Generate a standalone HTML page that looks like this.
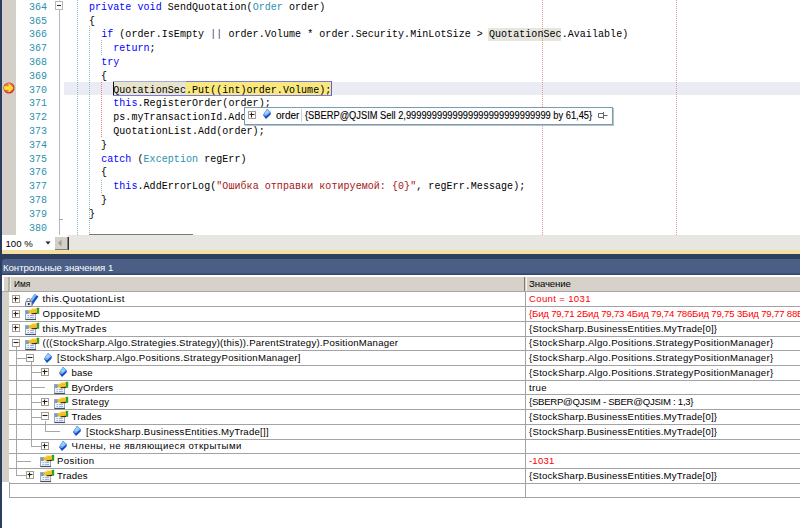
<!DOCTYPE html>
<html><head><meta charset="utf-8"><style>
html,body{margin:0;padding:0;width:800px;height:528px;overflow:hidden;background:#fff;position:relative}
div,span.a{position:absolute}
.nw{white-space:pre}
#nav{left:0;top:0;width:2px;height:528px;background:#2b3d5f}
#mg{left:2px;top:0;width:14px;height:235px;background:#d4d0c9}
.ln{left:16px;top:0.5px;width:31px;text-align:right;font:10px/13.79px "Liberation Mono",monospace;color:#2b91af;white-space:pre}
.cd{left:89px;font:10px/13.79px "Liberation Mono",monospace;letter-spacing:0.058px;color:#000;white-space:pre}
.k{color:#0000ff}.t{color:#2b91af}.s{color:#a31515}
.tipt{-webkit-text-stroke:0.1px currentColor;font:10px/16px "Liberation Sans",sans-serif;color:#000;white-space:pre;transform-origin:0 0}
.gt{font:9.6px/14.7px "Liberation Sans",sans-serif;color:#000;white-space:pre;transform-origin:0 0}
.r{color:#ff0000}
.rl{left:9px;width:791px;height:1px;background:#a3a3a6}
.tl{background:#a9a9a9}
.bx{width:7px;height:7px;border:1px solid #9d9a94;background:#fff}
.bx i{position:absolute;left:2px;top:3px;width:3px;height:1px;background:#222}
.bx b{position:absolute;left:3px;top:2px;width:1px;height:3px;background:#222}
svg{position:absolute;overflow:visible}
</style></head><body>
<div id="nav"></div>
<div id="mg"></div>
<div style="left:64px;top:82px;width:736px;height:12.6px;background:#ebebf3"></div>
<div style="left:113px;top:81px;width:218px;height:12.8px;background:#f9e87e;border-top:1.3px solid #7878e0;border-bottom:1.3px solid #7878e8;border-right:1.3px solid #5a5af0"></div>
<div style="left:113px;top:82px;width:1px;height:13px;background:#111"></div>
<div style="left:114px;top:82.3px;width:71.5px;height:12.8px;background:#e9e5cc"></div>
<div style="left:113px;top:81px;width:72.5px;height:1.3px;background:#a8a8dc"></div>
<div style="left:488px;top:27.5px;width:73px;height:13px;background:#e6e6de"></div>
<div style="left:77px;top:0px;width:1px;height:235px;background:repeating-linear-gradient(to bottom,#88bccb 0 1px,transparent 1px 2px)"></div>
<div style="left:89px;top:26px;width:1px;height:209px;background:repeating-linear-gradient(to bottom,#88bccb 0 1px,transparent 1px 2px)"></div>
<div style="left:101px;top:40px;width:1px;height:15px;background:repeating-linear-gradient(to bottom,#88bccb 0 1px,transparent 1px 2px)"></div>
<div style="left:101px;top:82px;width:1px;height:55px;background:repeating-linear-gradient(to bottom,#e88080 0 1px,transparent 1px 2px)"></div>
<div style="left:101px;top:180px;width:1px;height:13px;background:repeating-linear-gradient(to bottom,#88bccb 0 1px,transparent 1px 2px)"></div>
<div style="left:542px;top:0px;width:1px;height:235px;background:repeating-linear-gradient(to bottom,#dc9a9a 0 1px,transparent 1px 2px)"></div>
<div style="left:676px;top:0px;width:1px;height:235px;background:repeating-linear-gradient(to bottom,#dc9a9a 0 1px,transparent 1px 2px)"></div>
<div style="left:59px;top:10px;width:1px;height:225px;background:#b4b8c4"></div>
<div style="left:59px;top:0px;width:1px;height:1px;background:#c8ccd4"></div>
<div style="left:59px;top:219px;width:4px;height:1px;background:#a0a4b0"></div>
<svg style="left:55px;top:1px" width="9" height="10"><rect x="0.5" y="0.5" width="7" height="8" fill="#fff" stroke="#b8b8bc"/><path d="M2 4.5h4" stroke="#3a3030" stroke-width="1.1"/></svg>
<div style="left:89px;top:234px;width:104px;height:1px;background:#7a7a7a"></div>
<svg style="left:2px;top:80px" width="14" height="16"><circle cx="7" cy="8" r="5.6" fill="#c83030"/><circle cx="6.8" cy="7.7" r="4.6" fill="#f07850"/><path d="M2.2 6.2 L6.6 6.2 L6.6 3.2 L11.6 8 L6.6 12.6 L6.6 9.8 L2.2 9.8 Z" fill="#ffe428"/></svg>
<div class="ln" style="top:0.9px">364
365
366
367
368
369
370
371
372
373
374
375
376
377
378
379
380</div>
<div class="cd" style="top:0.9px"><span class="k">private</span> <span class="k">void</span> SendQuotation(<span class="t">Order</span> order)
{
  <span class="k">if</span> (order.IsEmpty <span style="color:#5a3a70">||</span> order.Volume * order.Security.MinLotSize &gt; QuotationSec.Available)
    <span class="k">return</span>;
  <span class="k">try</span>
  {
    QuotationSec.Put((int)order.Volume);
    <span class="k">this</span>.RegisterOrder(order);
    ps.myTransactionId.Add(order.TransactionId);
    QuotationList.Add(order);
  }
  <span class="k">catch</span> (<span class="t">Exception</span> regErr)
  {
    <span class="k">this</span>.AddErrorLog(<span class="s">"Ошибка отправки котируемой: {0}"</span>, regErr.Message);
  }
}
</div>
<div style="left:244px;top:107px;width:367px;height:16px;background:#fdfdfd;border:1px solid #7d9bb0;box-shadow:1px 1px 0 #b8c0c8"></div>
<div class="tipt" style="left:276px;top:108px">order</div>
<svg style="left:248px;top:111px" width="9" height="9"><rect x="0.5" y="0.5" width="7" height="7" fill="#fff" stroke="#a39d93"/><path d="M1.5 3.5h5 M3.5 1.5v5" stroke="#2a2016" stroke-width="1.1"/></svg>
<svg style="left:260px;top:108.5px" width="14" height="13"><path d="M7 0 L10.8 3.2 L10.6 5.6 L6 10 L3 6 Z" fill="#1846c0"/><path d="M7 0 L10.8 3.2 L6 7.3 L3 6 Z" fill="#6aaef0"/><path d="M7 0.8 L9.5 3 L6.5 5.5 L4.5 4.5 Z" fill="#9ad0fa"/></svg>
<div style="left:301px;top:109px;width:1px;height:13px;background:#c8d4e4"></div>
<svg style="left:597px;top:111px" width="12" height="9"><path d="M1.5 2.5h5v4h-5z M6.5 4.5h4 M6.5 1v7" fill="none" stroke="#606870" stroke-width="1"/></svg>
<div class="tipt" style="left:305px;top:108px;transform:scaleX(0.93)">{SBERP@QJSIM Sell 2,9999999999999999999999999999 by 61,45}</div>
<div style="left:2px;top:235px;width:50px;height:15px;background:#fff"></div>
<div class="gt" style="left:5.5px;top:236.5px">100 %</div>
<div style="left:67px;top:235px;width:733px;height:15px;background:#e8e6e1"></div>
<div style="left:54px;top:236px;width:13px;height:14px;background:#d6d3ce;border-right:1px solid #404040;border-bottom:1px solid #404040;box-sizing:border-box"></div>
<svg style="left:45px;top:241px" width="7" height="4"><path d="M0.5 0.5h5l-2.5 3z" fill="#1a1a2a"/></svg>
<div style="left:53.5px;top:236px;width:14px;height:14px;background:#d4d0c8;border-top:1px solid #fff;border-left:1px solid #fff;box-shadow:inset -1px -1px 0 #808080, 1px 1px 0 #303030;box-sizing:border-box"></div>
<svg style="left:57px;top:239px" width="6" height="8"><path d="M4.5 0.5v7l-3.5-3.5z" fill="#a09c94"/></svg>
<div style="left:2px;top:250px;width:798px;height:3.5px;background:#f3dfa0"></div>
<div style="left:2px;top:253.5px;width:798px;height:8px;background:#2d3e60"></div>
<div style="left:2px;top:258.5px;width:798px;height:16px;background:#4b5e85;border-top-left-radius:3px;box-shadow:inset 0 -1.5px 0 #34466a"></div>
<div class="gt" style="left:3px;top:260.5px;color:#fff;-webkit-text-stroke:0;letter-spacing:-0.03px">Контрольные значения 1</div>
<div style="left:2px;top:274.6px;width:798px;height:223px;background:#fff"></div>
<div style="left:2px;top:277px;width:7px;height:205px;background:#d4d0c8"></div>
<div style="left:9px;top:497px;width:1px;height:0px;background:#a3a3a6"></div>
<div style="left:2px;top:277px;width:798px;height:14px;background:#d6d2ca"></div>
<div style="left:2px;top:291px;width:798px;height:1px;background:#a8a8aa"></div>
<div style="left:2px;top:277px;width:1.5px;height:14px;background:#fff"></div>
<div style="left:8px;top:277px;width:1.5px;height:14px;background:#b4b0a8"></div>
<div style="left:9.5px;top:277px;width:1px;height:14px;background:#eeeae4"></div>
<div style="left:524px;top:277px;width:1px;height:14px;background:#8a7a68"></div>
<div style="left:525.5px;top:277px;width:1px;height:14px;background:#f4f2ee"></div>
<div class="gt" style="left:14px;top:277.3px;transform:scaleX(0.87)">Имя</div>
<div class="gt" style="left:529px;top:277.3px;letter-spacing:-0.09px">Значение</div>
<div style="left:524.5px;top:292px;width:1px;height:205px;background:#a3a3a6"></div>
<div style="left:9px;top:482px;width:1px;height:15px;background:#a3a3a6"></div>
<div style="left:16.0px;top:347.0px;width:1px;height:128.3px;background:#a6a6a6"></div>
<div style="left:30.5px;top:361.7px;width:1px;height:84.2px;background:#a6a6a6"></div>
<div style="left:45.0px;top:420.5px;width:1px;height:10.7px;background:#a6a6a6"></div>
<div style="left:16.0px;top:357.7px;width:10.5px;height:1px;background:#a6a6a6"></div>
<div style="left:30.5px;top:372.4px;width:10.5px;height:1px;background:#a6a6a6"></div>
<div style="left:30.5px;top:387.1px;width:14.5px;height:1px;background:#a6a6a6"></div>
<div style="left:30.5px;top:401.8px;width:10.5px;height:1px;background:#a6a6a6"></div>
<div style="left:30.5px;top:416.5px;width:10.5px;height:1px;background:#a6a6a6"></div>
<div style="left:45.0px;top:431.1px;width:14.5px;height:1px;background:#a6a6a6"></div>
<div style="left:30.5px;top:445.9px;width:10.5px;height:1px;background:#a6a6a6"></div>
<div style="left:16.0px;top:460.6px;width:14.5px;height:1px;background:#a6a6a6"></div>
<div style="left:16.0px;top:475.2px;width:10.5px;height:1px;background:#a6a6a6"></div>
<div class="rl" style="top:306.20px"></div>
<svg style="left:12px;top:295px" width="9" height="9"><rect x="0.5" y="0.5" width="7" height="7" fill="#fff" stroke="#a39d93"/><path d="M1.5 3.5h5" stroke="#2a2016" stroke-width="1.1"/><path d="M3.5 1.5v5" stroke="#2a2016" stroke-width="1.1"/></svg>
<svg style="left:25.0px;top:293.0px" width="14" height="13"><path d="M3.5 9.5 L9.5 1 L13.5 3.5 L7.5 12 Z" fill="#1a50c0"/><path d="M3.5 9.5 L9.5 1 L11.5 2.2 L5.5 10.7 Z" fill="#7cbcf4"/><path d="M1.8 9 v-1.8 a1.7 1.7 0 0 1 3.4 0 v1.8" fill="none" stroke="#8a90a0" stroke-width="1.1"/><rect x="0.5" y="8.5" width="6.5" height="5" rx="0.8" fill="#dfe3ea" stroke="#707888"/><rect x="3" y="10" width="1.6" height="2" fill="#283040"/></svg>
<div class="gt" style="left:42.5px;top:292.30px;letter-spacing:0.454px">this.QuotationList</div>
<div class="gt r" style="left:529px;top:292.30px;letter-spacing:0.327px">Count = 1031</div>
<div class="rl" style="top:320.90px"></div>
<svg style="left:12px;top:310px" width="9" height="9"><rect x="0.5" y="0.5" width="7" height="7" fill="#fff" stroke="#a39d93"/><path d="M1.5 3.5h5" stroke="#2a2016" stroke-width="1.1"/><path d="M3.5 1.5v5" stroke="#2a2016" stroke-width="1.1"/></svg>
<svg style="left:25.0px;top:307.3px" width="14" height="13"><rect x="0.5" y="3.5" width="10" height="9" fill="#eef4fc" stroke="#9aa8bc"/><path d="M0.5 12.5h10.5" stroke="#4a5262" stroke-width="1.2"/><rect x="1" y="4" width="2.5" height="3" fill="#6a9ae8"/><path d="M2.5 8.5h1.5 M5 8.5h4 M2.5 10.5h1.5 M5 10.5h4" stroke="#9ab0e0"/><path d="M2.5 6.8 L4.5 3 L8 1 L12.2 1 L12.2 6.6 L8 7.2 L6 6.4 Z" fill="#f0c028"/><path d="M4.5 3.2 L8 1.5 L11 1.6" stroke="#fff090" stroke-width="1" fill="none"/><path d="M6.5 6.8 L12 6.4" stroke="#3a2c10" stroke-width="1.1"/><path d="M2.6 6.8 L4 4.5" stroke="#b08a20" stroke-width="0.8"/><rect x="12" y="0.8" width="2.2" height="6" fill="#2ea02e"/></svg>
<div class="gt" style="left:42.5px;top:307.00px;letter-spacing:0.498px">OppositeMD</div>
<div class="gt r" style="left:529px;top:307.00px;letter-spacing:-0.182px">{Бид 79,71 2Бид 79,73 4Бид 79,74 786Бид 79,75 3Бид 79,77 88Бид 79,78</div>
<div class="rl" style="top:335.60px"></div>
<svg style="left:12px;top:324px" width="9" height="9"><rect x="0.5" y="0.5" width="7" height="7" fill="#fff" stroke="#a39d93"/><path d="M1.5 3.5h5" stroke="#2a2016" stroke-width="1.1"/><path d="M3.5 1.5v5" stroke="#2a2016" stroke-width="1.1"/></svg>
<svg style="left:25.0px;top:322.0px" width="14" height="13"><rect x="0.5" y="3.5" width="10" height="9" fill="#eef4fc" stroke="#9aa8bc"/><path d="M0.5 12.5h10.5" stroke="#4a5262" stroke-width="1.2"/><rect x="1" y="4" width="2.5" height="3" fill="#6a9ae8"/><path d="M2.5 8.5h1.5 M5 8.5h4 M2.5 10.5h1.5 M5 10.5h4" stroke="#9ab0e0"/><path d="M2.5 6.8 L4.5 3 L8 1 L12.2 1 L12.2 6.6 L8 7.2 L6 6.4 Z" fill="#f0c028"/><path d="M4.5 3.2 L8 1.5 L11 1.6" stroke="#fff090" stroke-width="1" fill="none"/><path d="M6.5 6.8 L12 6.4" stroke="#3a2c10" stroke-width="1.1"/><path d="M2.6 6.8 L4 4.5" stroke="#b08a20" stroke-width="0.8"/><rect x="12" y="0.8" width="2.2" height="6" fill="#2ea02e"/></svg>
<div class="gt" style="left:42.5px;top:321.70px;letter-spacing:0.34px">this.MyTrades</div>
<div class="gt" style="left:529px;top:321.70px;letter-spacing:0.21px">{StockSharp.BusinessEntities.MyTrade[0]}</div>
<div class="rl" style="top:350.30px"></div>
<svg style="left:12px;top:339px" width="9" height="9"><rect x="0.5" y="0.5" width="7" height="7" fill="#fff" stroke="#a39d93"/><path d="M1.5 3.5h5" stroke="#2a2016" stroke-width="1.1"/></svg>
<svg style="left:25.0px;top:336.7px" width="14" height="13"><rect x="0.5" y="3.5" width="10" height="9" fill="#eef4fc" stroke="#9aa8bc"/><path d="M0.5 12.5h10.5" stroke="#4a5262" stroke-width="1.2"/><rect x="1" y="4" width="2.5" height="3" fill="#6a9ae8"/><path d="M2.5 8.5h1.5 M5 8.5h4 M2.5 10.5h1.5 M5 10.5h4" stroke="#9ab0e0"/><path d="M2.5 6.8 L4.5 3 L8 1 L12.2 1 L12.2 6.6 L8 7.2 L6 6.4 Z" fill="#f0c028"/><path d="M4.5 3.2 L8 1.5 L11 1.6" stroke="#fff090" stroke-width="1" fill="none"/><path d="M6.5 6.8 L12 6.4" stroke="#3a2c10" stroke-width="1.1"/><path d="M2.6 6.8 L4 4.5" stroke="#b08a20" stroke-width="0.8"/><rect x="12" y="0.8" width="2.2" height="6" fill="#2ea02e"/></svg>
<div class="gt" style="left:42.5px;top:336.40px;letter-spacing:0.234px">(((StockSharp.Algo.Strategies.Strategy)(this)).ParentStrategy).PositionManager</div>
<div class="gt" style="left:529px;top:336.40px;letter-spacing:0.285px">{StockSharp.Algo.Positions.StrategyPositionManager}</div>
<div class="rl" style="top:365.00px"></div>
<svg style="left:26px;top:354px" width="9" height="9"><rect x="0.5" y="0.5" width="7" height="7" fill="#fff" stroke="#a39d93"/><path d="M1.5 3.5h5" stroke="#2a2016" stroke-width="1.1"/></svg>
<svg style="left:41.0px;top:352.6px" width="14" height="13"><path d="M7 0 L10.8 3.2 L10.6 5.6 L6 10 L3 6 Z" fill="#1846c0"/><path d="M7 0 L10.8 3.2 L6 7.3 L3 6 Z" fill="#6aaef0"/><path d="M7 0.8 L9.5 3 L6.5 5.5 L4.5 4.5 Z" fill="#9ad0fa"/></svg>
<div class="gt" style="left:57.0px;top:351.10px;letter-spacing:0.295px">[StockSharp.Algo.Positions.StrategyPositionManager]</div>
<div class="gt" style="left:529px;top:351.10px;letter-spacing:0.285px">{StockSharp.Algo.Positions.StrategyPositionManager}</div>
<div class="rl" style="top:379.70px"></div>
<svg style="left:41px;top:368px" width="9" height="9"><rect x="0.5" y="0.5" width="7" height="7" fill="#fff" stroke="#a39d93"/><path d="M1.5 3.5h5" stroke="#2a2016" stroke-width="1.1"/><path d="M3.5 1.5v5" stroke="#2a2016" stroke-width="1.1"/></svg>
<svg style="left:55.5px;top:367.3px" width="14" height="13"><path d="M7 0 L10.8 3.2 L10.6 5.6 L6 10 L3 6 Z" fill="#1846c0"/><path d="M7 0 L10.8 3.2 L6 7.3 L3 6 Z" fill="#6aaef0"/><path d="M7 0.8 L9.5 3 L6.5 5.5 L4.5 4.5 Z" fill="#9ad0fa"/></svg>
<div class="gt" style="left:71.5px;top:365.80px;letter-spacing:0.124px">base</div>
<div class="gt" style="left:529px;top:365.80px;letter-spacing:0.285px">{StockSharp.Algo.Positions.StrategyPositionManager}</div>
<div class="rl" style="top:394.40px"></div>
<svg style="left:54.0px;top:380.8px" width="14" height="13"><rect x="0.5" y="3.5" width="10" height="9" fill="#eef4fc" stroke="#9aa8bc"/><path d="M0.5 12.5h10.5" stroke="#4a5262" stroke-width="1.2"/><rect x="1" y="4" width="2.5" height="3" fill="#6a9ae8"/><path d="M2.5 8.5h1.5 M5 8.5h4 M2.5 10.5h1.5 M5 10.5h4" stroke="#9ab0e0"/><path d="M2.5 6.8 L4.5 3 L8 1 L12.2 1 L12.2 6.6 L8 7.2 L6 6.4 Z" fill="#f0c028"/><path d="M4.5 3.2 L8 1.5 L11 1.6" stroke="#fff090" stroke-width="1" fill="none"/><path d="M6.5 6.8 L12 6.4" stroke="#3a2c10" stroke-width="1.1"/><path d="M2.6 6.8 L4 4.5" stroke="#b08a20" stroke-width="0.8"/><rect x="12" y="0.8" width="2.2" height="6" fill="#2ea02e"/></svg>
<div class="gt" style="left:71.5px;top:380.50px;letter-spacing:0.161px">ByOrders</div>
<div class="gt" style="left:529px;top:380.50px;letter-spacing:0.317px">true</div>
<div class="rl" style="top:409.10px"></div>
<svg style="left:41px;top:398px" width="9" height="9"><rect x="0.5" y="0.5" width="7" height="7" fill="#fff" stroke="#a39d93"/><path d="M1.5 3.5h5" stroke="#2a2016" stroke-width="1.1"/><path d="M3.5 1.5v5" stroke="#2a2016" stroke-width="1.1"/></svg>
<svg style="left:54.0px;top:395.5px" width="14" height="13"><rect x="0.5" y="3.5" width="10" height="9" fill="#eef4fc" stroke="#9aa8bc"/><path d="M0.5 12.5h10.5" stroke="#4a5262" stroke-width="1.2"/><rect x="1" y="4" width="2.5" height="3" fill="#6a9ae8"/><path d="M2.5 8.5h1.5 M5 8.5h4 M2.5 10.5h1.5 M5 10.5h4" stroke="#9ab0e0"/><path d="M2.5 6.8 L4.5 3 L8 1 L12.2 1 L12.2 6.6 L8 7.2 L6 6.4 Z" fill="#f0c028"/><path d="M4.5 3.2 L8 1.5 L11 1.6" stroke="#fff090" stroke-width="1" fill="none"/><path d="M6.5 6.8 L12 6.4" stroke="#3a2c10" stroke-width="1.1"/><path d="M2.6 6.8 L4 4.5" stroke="#b08a20" stroke-width="0.8"/><rect x="12" y="0.8" width="2.2" height="6" fill="#2ea02e"/></svg>
<div class="gt" style="left:71.5px;top:395.20px;letter-spacing:0.259px">Strategy</div>
<div class="gt" style="left:529px;top:395.20px;letter-spacing:-0.273px">{SBERP@QJSIM - SBER@QJSIM : 1,3}</div>
<div class="rl" style="top:423.80px"></div>
<svg style="left:41px;top:412px" width="9" height="9"><rect x="0.5" y="0.5" width="7" height="7" fill="#fff" stroke="#a39d93"/><path d="M1.5 3.5h5" stroke="#2a2016" stroke-width="1.1"/></svg>
<svg style="left:54.0px;top:410.2px" width="14" height="13"><rect x="0.5" y="3.5" width="10" height="9" fill="#eef4fc" stroke="#9aa8bc"/><path d="M0.5 12.5h10.5" stroke="#4a5262" stroke-width="1.2"/><rect x="1" y="4" width="2.5" height="3" fill="#6a9ae8"/><path d="M2.5 8.5h1.5 M5 8.5h4 M2.5 10.5h1.5 M5 10.5h4" stroke="#9ab0e0"/><path d="M2.5 6.8 L4.5 3 L8 1 L12.2 1 L12.2 6.6 L8 7.2 L6 6.4 Z" fill="#f0c028"/><path d="M4.5 3.2 L8 1.5 L11 1.6" stroke="#fff090" stroke-width="1" fill="none"/><path d="M6.5 6.8 L12 6.4" stroke="#3a2c10" stroke-width="1.1"/><path d="M2.6 6.8 L4 4.5" stroke="#b08a20" stroke-width="0.8"/><rect x="12" y="0.8" width="2.2" height="6" fill="#2ea02e"/></svg>
<div class="gt" style="left:71.5px;top:409.90px;letter-spacing:0.133px">Trades</div>
<div class="gt" style="left:529px;top:409.90px;letter-spacing:0.21px">{StockSharp.BusinessEntities.MyTrade[0]}</div>
<div class="rl" style="top:438.50px"></div>
<svg style="left:70.0px;top:426.1px" width="14" height="13"><path d="M7 0 L10.8 3.2 L10.6 5.6 L6 10 L3 6 Z" fill="#1846c0"/><path d="M7 0 L10.8 3.2 L6 7.3 L3 6 Z" fill="#6aaef0"/><path d="M7 0.8 L9.5 3 L6.5 5.5 L4.5 4.5 Z" fill="#9ad0fa"/></svg>
<div class="gt" style="left:86.0px;top:424.60px;letter-spacing:0.239px">[StockSharp.BusinessEntities.MyTrade[]]</div>
<div class="gt" style="left:529px;top:424.60px;letter-spacing:0.21px">{StockSharp.BusinessEntities.MyTrade[0]}</div>
<div class="rl" style="top:453.20px"></div>
<svg style="left:41px;top:442px" width="9" height="9"><rect x="0.5" y="0.5" width="7" height="7" fill="#fff" stroke="#a39d93"/><path d="M1.5 3.5h5" stroke="#2a2016" stroke-width="1.1"/><path d="M3.5 1.5v5" stroke="#2a2016" stroke-width="1.1"/></svg>
<svg style="left:55.5px;top:440.8px" width="14" height="13"><path d="M7 0 L10.8 3.2 L10.6 5.6 L6 10 L3 6 Z" fill="#1846c0"/><path d="M7 0 L10.8 3.2 L6 7.3 L3 6 Z" fill="#6aaef0"/><path d="M7 0.8 L9.5 3 L6.5 5.5 L4.5 4.5 Z" fill="#9ad0fa"/></svg>
<div class="gt" style="left:71.5px;top:439.30px;letter-spacing:0.455px">Члены, не являющиеся открытыми</div>
<div class="rl" style="top:467.90px"></div>
<svg style="left:39.5px;top:454.3px" width="14" height="13"><rect x="0.5" y="3.5" width="10" height="9" fill="#eef4fc" stroke="#9aa8bc"/><path d="M0.5 12.5h10.5" stroke="#4a5262" stroke-width="1.2"/><rect x="1" y="4" width="2.5" height="3" fill="#6a9ae8"/><path d="M2.5 8.5h1.5 M5 8.5h4 M2.5 10.5h1.5 M5 10.5h4" stroke="#9ab0e0"/><path d="M2.5 6.8 L4.5 3 L8 1 L12.2 1 L12.2 6.6 L8 7.2 L6 6.4 Z" fill="#f0c028"/><path d="M4.5 3.2 L8 1.5 L11 1.6" stroke="#fff090" stroke-width="1" fill="none"/><path d="M6.5 6.8 L12 6.4" stroke="#3a2c10" stroke-width="1.1"/><path d="M2.6 6.8 L4 4.5" stroke="#b08a20" stroke-width="0.8"/><rect x="12" y="0.8" width="2.2" height="6" fill="#2ea02e"/></svg>
<div class="gt" style="left:57.0px;top:454.00px;letter-spacing:0.421px">Position</div>
<div class="gt r" style="left:529px;top:454.00px;letter-spacing:0.173px">-1031</div>
<div class="rl" style="top:482.60px"></div>
<svg style="left:26px;top:471px" width="9" height="9"><rect x="0.5" y="0.5" width="7" height="7" fill="#fff" stroke="#a39d93"/><path d="M1.5 3.5h5" stroke="#2a2016" stroke-width="1.1"/><path d="M3.5 1.5v5" stroke="#2a2016" stroke-width="1.1"/></svg>
<svg style="left:39.5px;top:469.0px" width="14" height="13"><rect x="0.5" y="3.5" width="10" height="9" fill="#eef4fc" stroke="#9aa8bc"/><path d="M0.5 12.5h10.5" stroke="#4a5262" stroke-width="1.2"/><rect x="1" y="4" width="2.5" height="3" fill="#6a9ae8"/><path d="M2.5 8.5h1.5 M5 8.5h4 M2.5 10.5h1.5 M5 10.5h4" stroke="#9ab0e0"/><path d="M2.5 6.8 L4.5 3 L8 1 L12.2 1 L12.2 6.6 L8 7.2 L6 6.4 Z" fill="#f0c028"/><path d="M4.5 3.2 L8 1.5 L11 1.6" stroke="#fff090" stroke-width="1" fill="none"/><path d="M6.5 6.8 L12 6.4" stroke="#3a2c10" stroke-width="1.1"/><path d="M2.6 6.8 L4 4.5" stroke="#b08a20" stroke-width="0.8"/><rect x="12" y="0.8" width="2.2" height="6" fill="#2ea02e"/></svg>
<div class="gt" style="left:57.0px;top:468.70px;letter-spacing:0.216px">Trades</div>
<div class="gt" style="left:529px;top:468.70px;letter-spacing:0.21px">{StockSharp.BusinessEntities.MyTrade[0]}</div>
<div class="rl" style="top:497.30px"></div>

</body></html>
